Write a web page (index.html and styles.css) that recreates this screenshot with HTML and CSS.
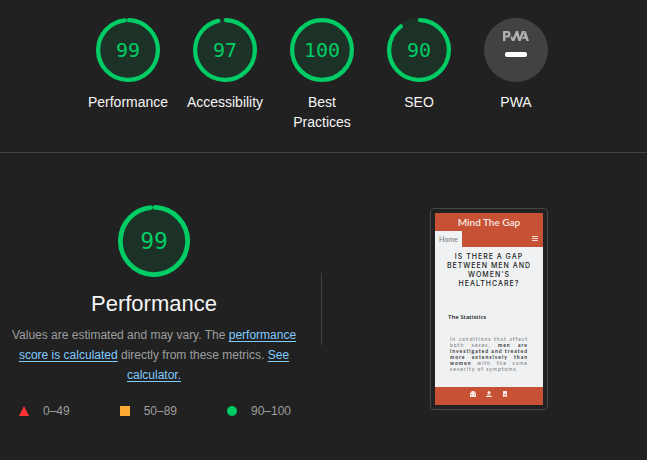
FILE: index.html
```html
<!DOCTYPE html>
<html lang="en">
<head>
<meta charset="utf-8">
<title>Audit report</title>
<link rel="stylesheet" href="styles.css">
</head>
<body>
<nav class="scores" aria-label="Category scores">
  <div class="score">
    <div class="gauge"><svg viewBox="0 0 120 120"><circle class="base" cx="60" cy="60" r="60"/><circle class="arc" cx="60" cy="60" r="56" pathLength="100" stroke-dasharray="97.700 100" transform="rotate(-88 60 60)"/></svg><span class="value">99</span></div>
    <span class="label">Performance</span>
  </div>
  <div class="score">
    <div class="gauge"><svg viewBox="0 0 120 120"><circle class="base" cx="60" cy="60" r="60"/><circle class="arc" cx="60" cy="60" r="56" pathLength="100" stroke-dasharray="95.800 100" transform="rotate(-88 60 60)"/></svg><span class="value">97</span></div>
    <span class="label">Accessibility</span>
  </div>
  <div class="score">
    <div class="gauge"><svg viewBox="0 0 120 120"><circle class="base" cx="60" cy="60" r="60"/><circle class="arc" cx="60" cy="60" r="56"/></svg><span class="value">100</span></div>
    <span class="label">Best Practices</span>
  </div>
  <div class="score">
    <div class="gauge"><svg viewBox="0 0 120 120"><circle class="base" cx="60" cy="60" r="60"/><circle class="arc" cx="60" cy="60" r="56" pathLength="100" stroke-dasharray="89 100" transform="rotate(-88 60 60)"/></svg><span class="value">90</span></div>
    <span class="label">SEO</span>
  </div>
  <div class="score">
    <div class="gauge"><svg viewBox="0 0 64 64" role="img" aria-label="PWA not applicable"><circle cx="32" cy="32" r="32" fill="#424242"/><g fill="#b0b0b0"><path d="M19 23V13h4.300q3.200 0 3.200 3.300t-3.200 3.300H21.500V23zM21.500 17.500h1.400q1.200 0 1.200-1.200t-1.200-1.200h-1.400z" fill-rule="evenodd"/><path d="M28 23l-1.500-3 1-2 1.600 2 2.900-7h2.100l1.600 6.300L38 13h2.500l-3.800 10h-2.400l-1.600-5.600L30.400 23z"/><path d="M38 20.800l.8-2h1.800l-.9-2.500 1.300-3.300h.7L45 23h-2.600l-.6-2.200z"/></g><rect x="21" y="34" width="22" height="5" rx="2" fill="#fff"/></svg></div>
    <span class="label">PWA</span>
  </div>
</nav>
<main class="category">
  <section class="summary">
    <div class="gauge large"><svg viewBox="0 0 120 120"><circle class="base" cx="60" cy="60" r="60"/><circle class="arc" cx="60" cy="60" r="56" pathLength="100" stroke-dasharray="97.700 100" transform="rotate(-88 60 60)"/></svg><span class="value">99</span></div>
    <h1 class="title">Performance</h1>
    <p class="description">Values are estimated and may vary. The <a href="#score">performance score is calculated</a> directly from these metrics. <a href="#calculator">See calculator.</a></p>
    <ul class="legend">
      <li><svg viewBox="0 0 10 10"><path d="M5 0l5 10H0z" fill="#f33"/></svg>0–49</li>
      <li><svg viewBox="0 0 10 10"><path d="M0 0h10v10H0z" fill="#fa3"/></svg>50–89</li>
      <li><svg viewBox="0 0 10 10"><circle cx="5" cy="5" r="5" fill="#0c6"/></svg>90–100</li>
    </ul>
  </section>
  <div class="divider"></div>
  <div class="frame">
    <article class="phone">
      <header class="site">Mind The Gap</header>
      <div class="bar"><span class="tab">Home</span><svg class="menu" viewBox="0 0 6 6"><path d="M0 .5h6M0 2.500h6M0 4.500h6" stroke="#f3ddd6"/></svg></div>
      <h2 class="headline">Is there a gap between men and women's healthcare?</h2>
      <h3 class="subhead">The Statistics</h3>
      <p class="copy">In conditions that affect both sexes, <b>men are investigated and treated more extensively than women</b> with the same severity of symptoms</p>
      <footer class="foot">
        <svg viewBox="0 0 8 6"><path d="M1 2l1.500-1V0h3v1L7 2v4H1z" fill="#fbe9e4"/><path d="M2.500 2.500v2M5.500 2.500v2" stroke="#c65134" stroke-width=".5"/></svg>
        <svg viewBox="0 0 8 6"><circle cx="4" cy="1.500" r="1.500" fill="#fbe9e4"/><path d="M2 3.500h4L5 4.500H2zM1 5h6v1H1z" fill="#fbe9e4"/></svg>
        <svg viewBox="0 0 8 6"><path d="M2 0h4v6H5L4 5 3 6H2z" fill="#fbe9e4"/><path d="M3 3.500h2" stroke="#c65134" stroke-width=".7"/></svg>
      </footer>
    </article>
  </div>
</main>
</body>
</html>
```
FILE: styles.css
```css
* { box-sizing: border-box; }
body {
  margin: 0;
  background: #212121;
  color: #f5f5f5;
  font: 14px/20px "Liberation Sans", Arial, sans-serif;
}
.scores {
  display: flex;
  justify-content: center;
  padding: 18px 3px 20px 0;
  border-bottom: 1px solid #424242;
}
.score {
  display: flex;
  flex-direction: column;
  align-items: center;
  gap: 10px;
  width: 97px;
  padding: 0 8px;
  text-align: center;
}
.gauge {
  display: grid;
  place-items: center;
  width: 64px;
  height: 64px;
  color: #0c6;
  font: 20px/24px "DejaVu Sans Mono", monospace;
}
.gauge > * { grid-area: 1 / 1; }
.gauge svg { display: block; width: 100%; height: 100%; }
.gauge.large { width: 72px; height: 72px; font-size: 23px; }
.base { fill: #0c6; fill-opacity: .1; }
.arc { fill: none; stroke: #0c6; stroke-width: 8; stroke-linecap: round; }
.category {
  display: grid;
  grid-template-columns: 1fr 1px 1fr;
  column-gap: 13px;
  align-items: center;
  padding: 44px 4px 24px 0;
}
.summary {
  display: flex;
  flex-direction: column;
  align-items: center;
  padding: 8px 8px 0;
}
.title {
  margin: 13px 0 7px;
  font-size: 22px;
  line-height: 28px;
  font-weight: 400;
}
.description {
  margin: 0;
  color: #9e9e9e;
  font-size: 12px;
  text-align: center;
}
.description a { color: #80cbff; text-underline-offset: 2px; }
.legend {
  display: flex;
  align-self: stretch;
  justify-content: space-between;
  margin: 0;
  padding: 16px 9px 0 11px;
  list-style: none;
  color: #9e9e9e;
  font-size: 12px;
}
.legend li { display: flex; align-items: center; gap: 14px; }
.legend svg { width: 10px; height: 10px; }
.divider { height: 72px; background: #424242; }
.frame {
  justify-self: center;
  padding: 4px;
  border: 1px solid #484848;
  border-radius: 4px;
}
.phone {
  display: flex;
  flex-direction: column;
  width: 108px;
  background: #eff1f3;
  color: #222;
  font-family: Inter, sans-serif;
}
.site {
  background: #c65134;
  color: #fbe9e4;
  font: 600 10px/18px Lato, sans-serif;
  text-align: center;
}
.bar {
  display: flex;
  align-items: center;
  justify-content: space-between;
  padding-right: 5px;
  background: #c65134;
}
.tab {
  padding: 0 4px;
  background: #eff1f3;
  color: #777;
  font: 7px/16px Lato, sans-serif;
}
.menu { width: 6px; height: 6px; }
.headline {
  margin: 5px 7px 0;
  font-size: 7px;
  line-height: 9px;
  font-weight: 500;
  letter-spacing: 1px;
  text-align: center;
  text-transform: uppercase;
}
.subhead {
  margin: 25px 13px 0;
  font: 600 6px/8px "Open Sans", sans-serif;
}
.copy {
  margin: 15px 15px 15px;
  color: #777;
  font: 5px/6px Lato, sans-serif;
  letter-spacing: 1px;
  text-align: justify;
}
.copy b { color: #333; }
.foot {
  display: flex;
  align-items: center;
  justify-content: center;
  gap: 8px;
  height: 18px;
  padding-bottom: 4px;
  background: #c65134;
}
.foot svg { width: 8px; height: 6px; }
```
